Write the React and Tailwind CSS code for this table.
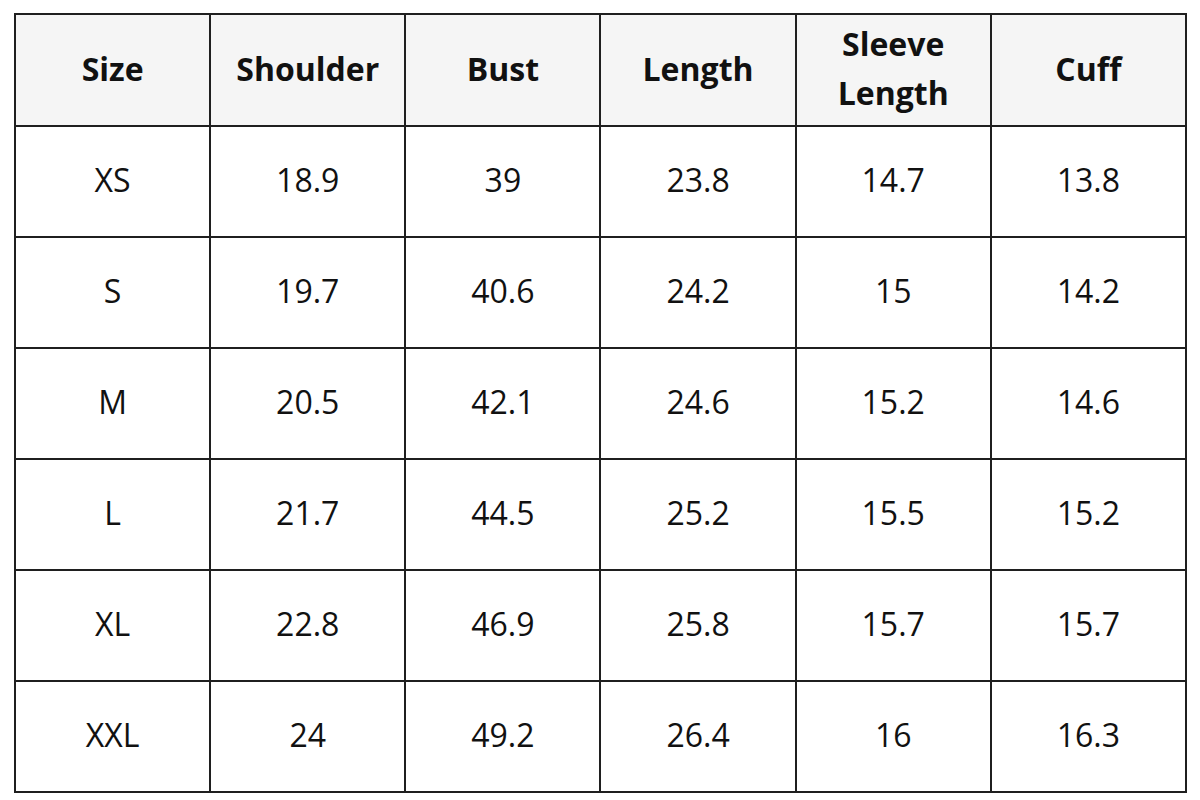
const headers = ["Size", "Shoulder", "Bust", "Length", "Sleeve Length", "Cuff"];

const rows = [
  ["XS", "18.9", "39", "23.8", "14.7", "13.8"],
  ["S", "19.7", "40.6", "24.2", "15", "14.2"],
  ["M", "20.5", "42.1", "24.6", "15.2", "14.6"],
  ["L", "21.7", "44.5", "25.2", "15.5", "15.2"],
  ["XL", "22.8", "46.9", "25.8", "15.7", "15.7"],
  ["XXL", "24", "49.2", "26.4", "16", "16.3"],
];

export default function App() {
  return (
    <div className="w-[1200px] h-[800px] bg-white pt-[13px] pl-[14px]" style={{ fontFamily: '"Open Sans", "Liberation Sans", sans-serif' }}>
      <table className="w-[1173px] table-fixed border-collapse text-[#111]">
        <thead>
          <tr className="h-[112px] bg-[#f5f5f5]">
            {headers.map((h) => (
              <th
                key={h}
                className="border-2 border-[#1f1f1f] px-6 pb-[4px] text-[32px] leading-[49px] font-bold text-center"
              >
                {h}
              </th>
            ))}
          </tr>
        </thead>
        <tbody>
          {rows.map((row) => (
            <tr key={row[0]} className="h-[111px]">
              {row.map((cell, i) => (
                <td
                  key={i}
                  className="border-2 border-[#1f1f1f] pb-[4px] text-center text-[32px] font-normal"
                >
                  {cell}
                </td>
              ))}
            </tr>
          ))}
        </tbody>
      </table>
    </div>
  );
}
